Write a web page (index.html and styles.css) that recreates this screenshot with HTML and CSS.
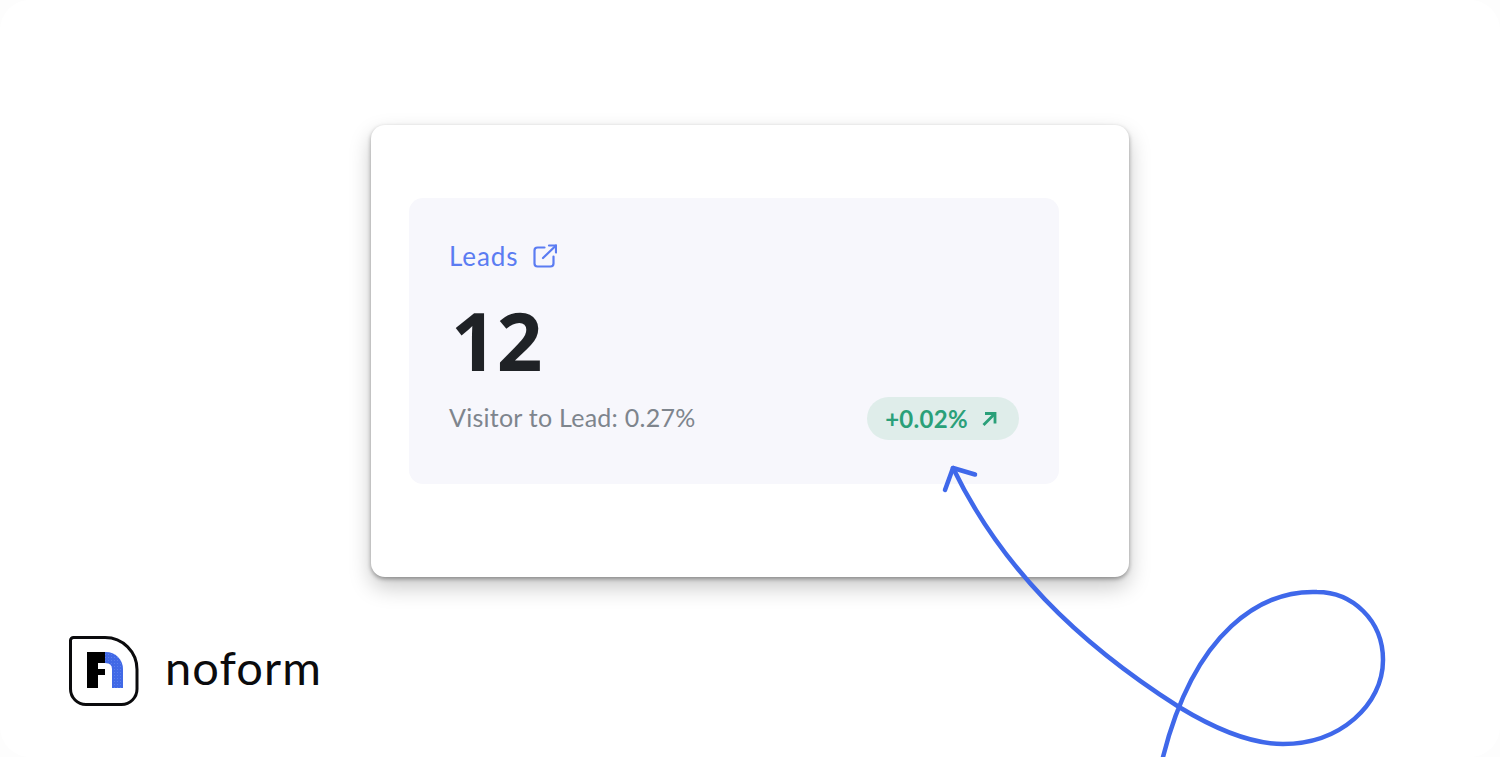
FILE: index.html
```html
<!DOCTYPE html>
<html lang="en">
<head>
    <meta charset="UTF-8">
    <meta name="viewport" content="width=device-width, initial-scale=1.0">
    <title>Noform - Leads</title>
    <link rel="stylesheet" href="styles.css">
</head>
<body>
    <div class="page">
        <div class="card">
            <div class="stat-panel">
                <div class="stat-title">
                    <span>Leads</span>
                    <svg class="link-icon" viewBox="0 0 24 24" fill="none" stroke="currentColor" stroke-width="2.200" stroke-linecap="round" stroke-linejoin="round">
                        <path d="M11.500 3.500H4.500a3 3 0 0 0-3 3v13a3 3 0 0 0 3 3h13a3 3 0 0 0 3-3v-7"/>
                        <path d="M10 14L23 1.500"/>
                        <path d="M16 1.500h7v7"/>
                    </svg>
                </div>
                <div class="stat-value">12</div>
                <div class="stat-footer">
                    <span class="stat-note">Visitor to Lead: 0.27%</span>
                    <span class="trend">
                        +0.02%
                        <svg class="trend-icon" viewBox="0 0 16 16" fill="none" stroke="currentColor" stroke-width="2.800">
                            <path d="M2.500 14L14 2.500"/>
                            <path d="M4 2.500h10v10"/>
                        </svg>
                    </span>
                </div>
            </div>
        </div>

        <div class="brand">
            <svg class="brand-mark" viewBox="0 0 70 70">
                <defs>
                    <pattern id="dots" width="3" height="3" patternUnits="userSpaceOnUse">
                        <rect width="3" height="3" fill="#4169e6"/>
                        <rect width="1" height="1" fill="#5c7fec"/>
                    </pattern>
                </defs>
                <path d="M4.500 1.500H36A32 32 0 0 1 68 33.500V53A15.500 15.500 0 0 1 52.500 68.500H17A15.500 15.500 0 0 1 1.500 53V4.500A3 3 0 0 1 4.500 1.500Z" fill="#fff" stroke="#0b0b0d" stroke-width="3"/>
                <path d="M18 16H36V27H29V33H36V39H29V52H18Z" fill="#000"/>
                <path d="M36 16H37A17 17 0 0 1 54 33V52H43V33Q43 27 36 27Z" fill="url(#dots)"/>
            </svg>
            <span class="brand-name">noform</span>
        </div>

        <!-- hand drawn arrow over the page -->
        <svg class="squiggle" viewBox="0 0 1500 757" fill="none" stroke="#3f68ea" stroke-width="4.500" stroke-linecap="round" stroke-linejoin="round">
            <path d="M953 468C1000 565 1075 641 1179 707C1225 735 1258 744 1283 744C1340 744 1383 705 1383 660C1383 620 1352 592 1317 592C1262 590 1195 630 1163 757"/>
            <path d="M945 490L953 468L975 474.500"/>
        </svg>
    </div>
</body>
</html>
```

FILE: styles.css
```css
* {
    box-sizing: border-box;
}
html, body {
    margin: 0;
    height: 100%;
    background: #fdfdfd;
}
.page {
    position: relative;
    height: 757px;
    overflow: hidden;
    background: #fff;
    border-radius: 30px;
    padding-top: 125px;
    font-family: "Noto Sans", Arial, sans-serif;
}
.card {
    width: 758px;
    height: 452px;
    margin: 0 auto;
    padding: 73px 70px 93px 38px;
    background: #fff;
    border-radius: 14px;
    box-shadow: 0 2px 4px rgba(0, 0, 0, 0.35), 0 10px 22px rgba(0, 0, 0, 0.22);
}
.stat-panel {
    height: 286px;
    padding: 41px 40px 0;
    background: #f7f7fc;
    border-radius: 14px;
}
.stat-title {
    display: flex;
    align-items: center;
    gap: 15px;
    height: 34px;
    color: #5b7cf2;
    font-family: Lato, sans-serif;
    font-size: 26px;
    letter-spacing: 0.9px;
}
.link-icon {
    width: 24px;
    height: 24px;
}
.stat-value {
    margin: 17px 0 0 2px;
    color: #1f2226;
    font-size: 80px;
    font-weight: 700;
    line-height: 100px;
}
.stat-footer {
    display: flex;
    justify-content: space-between;
    align-items: center;
    margin-top: 7px;
}
.stat-note {
    margin-bottom: 4px;
    color: #7e858d;
    font-family: Lato, sans-serif;
    font-size: 25px;
    letter-spacing: 0.25px;
}
.trend {
    display: flex;
    align-items: center;
    gap: 13px;
    height: 43px;
    padding: 0 22px 0 18px;
    background: #dfedea;
    border-radius: 22px;
    color: #2aa079;
    font-family: Lato, sans-serif;
    font-size: 24px;
    font-weight: 700;
    letter-spacing: 0.3px;
}
.trend-icon {
    width: 16px;
    height: 16px;
}
.brand {
    display: flex;
    align-items: center;
    gap: 26px;
    margin: 59px 0 0 69px;
}
.brand-mark {
    width: 70px;
    height: 70px;
}
.brand-name {
    margin-top: -8px;
    color: #0b0b0d;
    font-family: Lato, sans-serif;
    font-size: 47px;
    letter-spacing: 1.100px;
}
.squiggle {
    position: absolute;
    left: 0;
    top: 0;
    width: 1500px;
    height: 757px;
}
```
